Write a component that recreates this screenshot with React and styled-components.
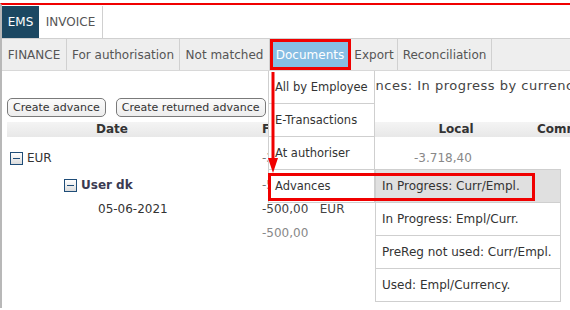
import React from "react";
import styled, { createGlobalStyle } from "styled-components";

const Global = createGlobalStyle`
  html, body { margin: 0; padding: 0; background: #fff; }
  body { font-family: "DejaVu Sans", Verdana, sans-serif; font-size: 12px; color: #333; }
`;

const Page = styled.div`
  position: relative;
  width: 570px;
  height: 310px;
  overflow: hidden;
  padding-top: 3px;
  box-sizing: border-box;
  background: #fff;
`;

const Frame = styled.div`
  border-top: 2px solid #f00000;
  border-left: 2px solid #b8b8b8;
  height: 305px;
  box-sizing: border-box;
`;

const TopTabs = styled.div`
  display: flex;
  margin-top: 1px;
  height: 32px;
`;

const TopTab = styled.div`
  display: flex;
  align-items: center;
  justify-content: center;
  width: ${(p) => p.$w}px;
  box-sizing: border-box;
  font-size: 12px;
  color: ${(p) => (p.$active ? "#fff" : "#555")};
  background: ${(p) => (p.$active ? "#1c4862" : "#fff")};
  border-right: ${(p) => (p.$active ? "none" : "1px solid #d0d0d0")};
`;

const NavBar = styled.div`
  display: flex;
  height: 31px;
  background: #eeeeee;
  border-top: 1px solid #d0d0d0;
  border-bottom: 1px solid #d8d8d8;
`;

const NavItem = styled.div`
  display: flex;
  align-items: center;
  justify-content: center;
  width: ${(p) => p.$w}px;
  box-sizing: border-box;
  white-space: nowrap;
  color: ${(p) => (p.$active ? "#fff" : "#555")};
  background: ${(p) => (p.$active ? "#87bde3" : "transparent")};
  border-right: 1px solid #d0d0d0;
  outline: ${(p) => (p.$marked ? "3px solid #f00000" : "none")};
  outline-offset: -3px;
`;

const Content = styled.div`
  padding-left: 5px;
`;

const TitleRow = styled.div`
  height: 27px;
  padding-top: 2px;
  box-sizing: border-box;
  display: flex;
  align-items: center;
  padding-left: 334px;
  white-space: nowrap;
  font-size: 13px;
  letter-spacing: 0.5px;
  color: #444;
`;

const ButtonRow = styled.div`
  display: flex;
  gap: 10px;
  height: 19px;
`;

const Button = styled.button`
  font-family: "DejaVu Sans", Verdana, sans-serif;
  font-size: 11px;
  color: #333;
  height: 19px;
  padding: 0 5px;
  border: 1px solid #7a7a7a;
  border-radius: 5px;
  background: linear-gradient(#fbfbfb, #ededed);
  line-height: 17px;
`;

const Table = styled.div`
  margin-top: 5px;
  display: grid;
  grid-template-columns: 210px 45px 152px 84px 150px;
  white-space: nowrap;
`;

const HeadCell = styled.div`
  height: 15px;
  line-height: 15px;
  background: linear-gradient(#f4f4f4, #e8e8e8);
  font-weight: bold;
  color: #333;
  text-align: ${(p) => p.$align || "center"};
  padding-left: ${(p) => p.$pad || 0}px;
  margin-bottom: 9px;
`;

const Cell = styled.div`
  height: 24px;
  display: flex;
  align-items: center;
  color: ${(p) => p.$color || "#333"};
  font-weight: ${(p) => (p.$bold ? "bold" : "normal")};
  padding-left: ${(p) => p.$indent || 0}px;
  margin-bottom: ${(p) => p.$gap || 0}px;
  gap: 4px;
`;

const Toggle = styled.span`
  width: 11px;
  height: 11px;
  border: 1px solid #1f4d78;
  background: linear-gradient(#ffffff, #dcdcdc);
  position: relative;
  flex: none;
  &::after {
    content: "";
    position: absolute;
    left: 2px;
    right: 2px;
    top: 5px;
    height: 1px;
    background: #1f4d78;
  }
`;

const Dropdown = styled.div`
  position: absolute;
  left: 268px;
  top: 71px;
  width: 107px;
  background: #fff;
  border: 1px solid #cfcfcf;
  border-top: none;
  box-sizing: border-box;
  font-size: 11.5px;
  z-index: 2;
`;

const MenuItem = styled.div`
  height: 32px;
  display: flex;
  align-items: center;
  padding-left: 6px;
  color: #333;
  white-space: nowrap;
  background: ${(p) => (p.$hover ? "#e0e0e0" : "#fff")};
  border-bottom: 1px solid #cfcfcf;
  &:last-child { border-bottom: none; }
`;

const Submenu = styled.div`
  position: absolute;
  left: 375px;
  top: 169px;
  width: 186px;
  background: #fff;
  border: 1px solid #cfcfcf;
  box-sizing: border-box;
  font-size: 12px;
  z-index: 2;
`;

const RedBox = styled.div`
  position: absolute;
  left: 268px;
  top: 173px;
  width: 267px;
  height: 28px;
  border: 3px solid #f00000;
  box-sizing: border-box;
  z-index: 3;
`;

const Arrow = styled.svg`
  position: absolute;
  left: 266px;
  top: 72px;
  z-index: 4;
`;

export default function App() {
  return (
    <>
      <Global />
      <Page>
        <Frame>
          <TopTabs>
            <TopTab $active $w={37}>EMS</TopTab>
            <TopTab $w={64}>INVOICE</TopTab>
          </TopTabs>
          <NavBar>
            <NavItem $w={65}>FINANCE</NavItem>
            <NavItem $w={113}>For authorisation</NavItem>
            <NavItem $w={90}>Not matched</NavItem>
            <NavItem $w={81} $active $marked>Documents</NavItem>
            <NavItem $w={47}>Export</NavItem>
            <NavItem $w={94}>Reconciliation</NavItem>
          </NavBar>
          <Content>
            <TitleRow>Advances: In progress by currency/employee</TitleRow>
            <ButtonRow>
              <Button>Create advance</Button>
              <Button>Create returned advance</Button>
            </ButtonRow>
            <Table>
              <HeadCell>Date</HeadCell>
              <HeadCell />
              <HeadCell $align="left">Foreign</HeadCell>
              <HeadCell>Local</HeadCell>
              <HeadCell $align="left" $pad={39}>Comment</HeadCell>

              <Cell $indent={3} $gap={3} style={{ gridColumn: "1 / 3" }}>
                <Toggle />EUR
              </Cell>
              <Cell $gap={3} $color="#777">-3.718,40</Cell>
              <Cell $gap={3} $color="#888">-3.718,40</Cell>
              <Cell $gap={3} />

              <Cell $indent={57} $bold $color="#3a3a52" style={{ gridColumn: "1 / 3" }}>
                <Toggle />User dk
              </Cell>
              <Cell $color="#777">-500,00</Cell>
              <Cell />
              <Cell />

              <Cell $indent={91} style={{ gridColumn: "1 / 3" }}>05-06-2021</Cell>
              <Cell $color="#444">-500,00&nbsp;&nbsp;&nbsp;EUR</Cell>
              <Cell />
              <Cell />

              <Cell style={{ gridColumn: "1 / 3" }} />
              <Cell $color="#888">-500,00</Cell>
              <Cell />
              <Cell />
            </Table>
          </Content>
        </Frame>

        <Dropdown>
          <MenuItem>All by Employee</MenuItem>
          <MenuItem>E-Transactions</MenuItem>
          <MenuItem>At authoriser</MenuItem>
          <MenuItem>Advances</MenuItem>
        </Dropdown>
        <Submenu>
          <MenuItem $hover>In Progress: Curr/Empl.</MenuItem>
          <MenuItem>In Progress: Empl/Curr.</MenuItem>
          <MenuItem>PreReg not used: Curr/Empl.</MenuItem>
          <MenuItem>Used: Empl/Currency.</MenuItem>
        </Submenu>
        <RedBox />
        <Arrow width="14" height="102" viewBox="0 0 14 102">
          <line x1="7" y1="0" x2="7" y2="88" stroke="#f00000" strokeWidth="3" />
          <polygon points="2,86 12,86 7,101" fill="#f00000" />
        </Arrow>
      </Page>
    </>
  );
}
